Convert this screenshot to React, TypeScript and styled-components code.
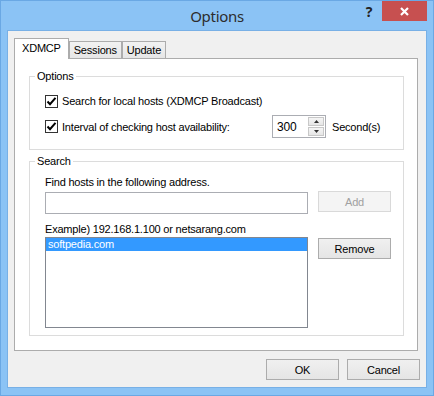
import React from 'react';
import styled, { createGlobalStyle } from 'styled-components';

const Global = createGlobalStyle`
  html, body { margin: 0; padding: 0; background: #ffffff; }
  body { font-family: "Liberation Sans", Arial, sans-serif; }
  #root { width: 434px; height: 396px; }
  * { box-sizing: border-box; }
`;

const Window = styled.div`
  width: 434px;
  height: 396px;
  border: 1px solid #6aa8e4;
  background: #8bc3f5;
  display: flex;
  flex-direction: column;
  padding: 0 6px 7px 6px;
`;

const TitleBar = styled.div`
  height: 29px;
  display: grid;
  grid-template-columns: 1fr auto 1fr;
  align-items: center;
`;

const Title = styled.div`
  grid-column: 2;
  font-family: "Noto Sans", "Open Sans", sans-serif;
  font-size: 15px;
  letter-spacing: -0.3px;
  color: #2d2d2d;
  line-height: 20px;
  padding-top: 1px;
`;

const Controls = styled.div`
  grid-column: 3;
  justify-self: end;
  align-self: start;
  display: flex;
  height: 20px;
`;

const HelpButton = styled.div`
  width: 26px;
  height: 20px;
  display: flex;
  align-items: center;
  justify-content: center;
  font-family: "Noto Sans", sans-serif;
  font-weight: 700;
  font-size: 14px;
  color: #222;
`;

const CloseButton = styled.div`
  width: 45px;
  height: 20px;
  background: #c75050;
  display: flex;
  align-items: center;
  justify-content: center;
`;

const Client = styled.div`
  flex: 1;
  border: 1px solid #78b0e6;
  background: #f0f0f0;
  padding: 7px 7px 7px 6px;
  display: flex;
  flex-direction: column;
  font-size: 11px;
  letter-spacing: -0.2px;
  color: #000;
`;

const TabStrip = styled.div`
  display: flex;
  align-items: flex-end;
  height: 20px;
`;

const Tab = styled.div<{ $active?: boolean }>`
  position: relative;
  border: 1px solid #acacac;
  border-bottom: none;
  display: flex;
  align-items: center;
  justify-content: center;
  white-space: nowrap;
  padding: ${(p) => (p.$active ? '0 7px 2px' : '0 4px')};
  height: ${(p) => (p.$active ? '21px' : '17px')};
  margin-bottom: ${(p) => (p.$active ? '-1px' : '0')};
  z-index: ${(p) => (p.$active ? 2 : 0)};
  background: ${(p) => (p.$active ? '#ffffff' : 'linear-gradient(#f2f2f2, #e6e6e6)')};
`;

const Panel = styled.div`
  background: #ffffff;
  border: 1px solid #acacac;
  margin-right: 1px;
  padding: 10px 13px 14px 14px;
  display: flex;
  flex-direction: column;
  gap: 4px;
`;

const Group = styled.fieldset<{ $pt: number; $pb: number; $pr: number }>`
  margin: 0;
  border: 1px solid #dcdcdc;
  padding: ${(p) => `${p.$pt}px ${p.$pr}px ${p.$pb}px 15px`};
  min-width: 0;
`;

const Legend = styled.legend`
  margin-left: -10px;
  padding: 0 2px;
  line-height: 14px;
  height: 14px;
`;

const CheckRow = styled.div<{ $h: number; $mt?: number }>`
  height: ${(p) => p.$h}px;
  margin-top: ${(p) => p.$mt ?? 0}px;
  display: flex;
  align-items: center;
  white-space: nowrap;
`;

const Box = styled.span`
  width: 13px;
  height: 13px;
  border: 1px solid #333333;
  background: #ffffff;
  display: flex;
  align-items: center;
  justify-content: center;
  margin-right: 4px;
  flex: none;
`;

const CheckLabel = styled.span<{ $w?: number }>`
  ${(p) => (p.$w ? `width: ${p.$w}px;` : '')}
  flex: none;
`;

const Spin = styled.div`
  width: 54px;
  height: 23px;
  border: 1px solid #abadb3;
  background: #fff;
  display: flex;
  align-items: center;
  justify-content: space-between;
  padding: 1px;
`;

const SpinValue = styled.span`
  padding-left: 3px;
  font-size: 12px;
`;

const SpinButtons = styled.div`
  width: 16px;
  height: 100%;
  display: flex;
  flex-direction: column;
  gap: 1px;
`;

const SpinArrow = styled.div`
  flex: 1;
  border: 1px solid #c8c8c8;
  background: linear-gradient(#f5f5f5, #e6e6e6);
  display: flex;
  align-items: center;
  justify-content: center;
`;

const Unit = styled.span`
  margin-left: 6px;
`;

const Line = styled.div<{ $mt?: number }>`
  height: 13px;
  line-height: 13px;
  margin-top: ${(p) => p.$mt ?? 0}px;
  white-space: nowrap;
`;

const FieldRow = styled.div<{ $mt: number }>`
  display: flex;
  gap: 10px;
  align-items: flex-start;
  margin-top: ${(p) => p.$mt}px;
`;

const TextInput = styled.div`
  width: 263px;
  height: 22px;
  border: 1px solid #abadb3;
  background: #fff;
`;

const Button = styled.div<{ $disabled?: boolean; $mt?: number }>`
  width: 73px;
  height: 21px;
  margin-top: ${(p) => p.$mt ?? 0}px;
  display: flex;
  align-items: center;
  justify-content: center;
  border: 1px solid ${(p) => (p.$disabled ? '#d9d9d9' : '#acacac')};
  background: ${(p) => (p.$disabled ? '#f4f4f4' : 'linear-gradient(#f0f0f0, #e5e5e5)')};
  color: ${(p) => (p.$disabled ? '#a0a0a0' : '#000')};
  flex: none;
`;

const ListBox = styled.div`
  width: 263px;
  height: 91px;
  border: 1px solid #828790;
  background: #fff;
`;

const ListItem = styled.div<{ $selected?: boolean }>`
  height: 13px;
  line-height: 13px;
  padding-left: 2px;
  background: ${(p) => (p.$selected ? '#3399ff' : 'transparent')};
  color: ${(p) => (p.$selected ? '#fff' : '#000')};
`;

const Footer = styled.div`
  margin-top: 8px;
  display: flex;
  justify-content: flex-end;
  gap: 8px;
  margin-right: -1px;
`;

const Check = () => (
  <svg width="11" height="11" viewBox="0 0 11 11">
    <path d="M1.5 5.5 L4 8.2 L9.5 1.8" fill="none" stroke="#000" strokeWidth="2" />
  </svg>
);

const Arrow = ({ up }: { up?: boolean }) => (
  <svg width="5" height="3" viewBox="0 0 5 3">
    <path d={up ? 'M0 3 L2.5 0 L5 3 Z' : 'M0 0 L2.5 3 L5 0 Z'} fill="#333" />
  </svg>
);

export default function App() {
  return (
    <>
      <Global />
      <Window>
        <TitleBar>
          <Title>Options</Title>
          <Controls>
            <HelpButton>?</HelpButton>
            <CloseButton>
              <svg width="9" height="9" viewBox="0 0 9 9">
                <path d="M1 1 L8 8 M8 1 L1 8" stroke="#fff" strokeWidth="2.2" />
              </svg>
            </CloseButton>
          </Controls>
        </TitleBar>
        <Client>
          <TabStrip>
            <Tab $active>XDMCP</Tab>
            <Tab>Sessions</Tab>
            <Tab>Update</Tab>
          </TabStrip>
          <Panel>
            <Group $pt={11} $pb={11} $pr={12}>
              <Legend>Options</Legend>
              <CheckRow $h={14}>
                <Box><Check /></Box>
                <CheckLabel>Search for local hosts (XDMCP Broadcast)</CheckLabel>
              </CheckRow>
              <CheckRow $h={23} $mt={7}>
                <Box><Check /></Box>
                <CheckLabel $w={210}>Interval of checking host availability:</CheckLabel>
                <Spin>
                  <SpinValue>300</SpinValue>
                  <SpinButtons>
                    <SpinArrow><Arrow up /></SpinArrow>
                    <SpinArrow><Arrow /></SpinArrow>
                  </SpinButtons>
                </Spin>
                <Unit>Second(s)</Unit>
              </CheckRow>
            </Group>
            <Group $pt={8} $pb={7} $pr={12}>
              <Legend>Search</Legend>
              <Line>Find hosts in the following address.</Line>
              <FieldRow $mt={3}>
                <TextInput />
                <Button $disabled $mt={-1}>Add</Button>
              </FieldRow>
              <Line $mt={9}>Example) 192.168.1.100 or netsarang.com</Line>
              <FieldRow $mt={1}>
                <ListBox>
                  <ListItem $selected>softpedia.com</ListItem>
                </ListBox>
                <Button $mt={1}>Remove</Button>
              </FieldRow>
            </Group>
          </Panel>
          <Footer>
            <Button>OK</Button>
            <Button>Cancel</Button>
          </Footer>
        </Client>
      </Window>
    </>
  );
}
